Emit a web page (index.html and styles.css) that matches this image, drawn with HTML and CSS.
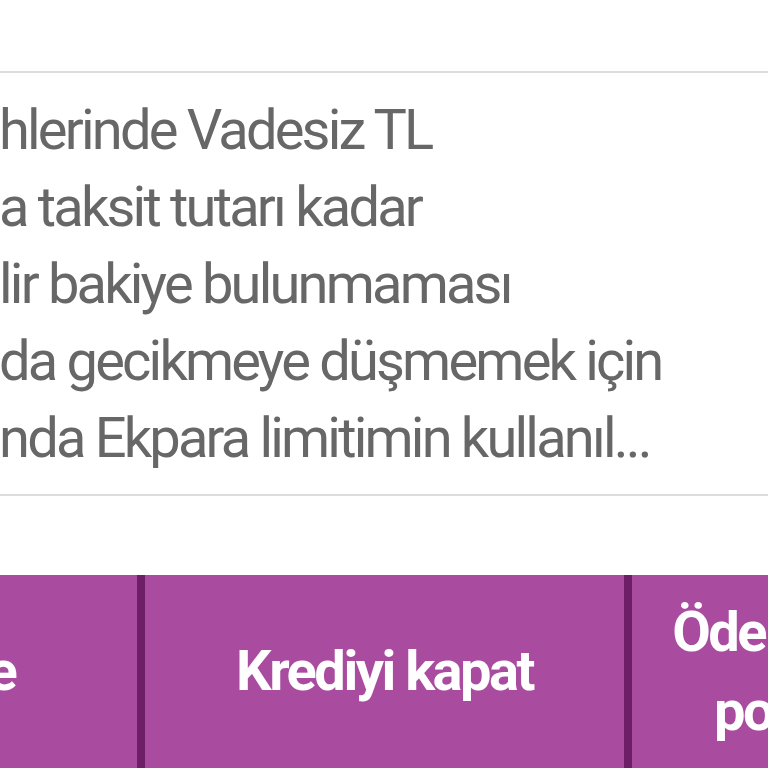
FILE: index.html
```html
<!DOCTYPE html>
<html lang="tr">
<head>
<meta charset="utf-8">
<link rel="stylesheet" href="styles.css">
</head>
<body>
<div class="screen">
  <div class="top"></div>
  <div class="card">
    <div class="line">hlerinde Vadesiz TL</div>
    <div class="line">a taksit tutarı kadar</div>
    <div class="line">lir bakiye bulunmaması</div>
    <div class="line">da gecikmeye düşmemek için</div>
    <div class="line">nda Ekpara limitimin kullanıl...</div>
  </div>
  <div class="gap"></div>
  <div class="actions">
    <div class="btn">Taksit öde</div>
    <div class="btn">Krediyi kapat</div>
    <div class="btn btn-last">Ödeme planımı al<br>postayla istek</div>
  </div>
</div>
</body>
</html>
```
FILE: styles.css
```css
html, body {
  margin: 0;
  padding: 0;
  background: #ffffff;
}
.screen {
  width: 768px;
  height: 768px;
  overflow: hidden;
  display: flex;
  flex-direction: column;
  font-family: Roboto, "Noto Sans", sans-serif;
}
.top {
  height: 71px;
  flex: 0 0 71px;
}
.card {
  border-top: 2px solid #dcdcdc;
  border-bottom: 2px solid #dcdcdc;
  padding: 19px 0 17px 0;
}
.line {
  font-size: 56px;
  line-height: 77px;
  letter-spacing: -2.8px;
  color: #676767;
  white-space: nowrap;
  margin-left: -1px;
}
.gap {
  flex: 0 0 79px;
}
.actions {
  flex: 1 1 auto;
  display: flex;
  margin-left: -342px;
  width: 1453px;
  background: #a94c9f;
}
.btn {
  flex: 0 0 479px;
  display: flex;
  align-items: center;
  justify-content: center;
  text-align: center;
  color: #ffffff;
  font-weight: 700;
  font-size: 56px;
  line-height: 79px;
  letter-spacing: -2.5px;
  white-space: nowrap;
}
.btn + .btn {
  border-left: 8px solid #6e1e66;
}
```
